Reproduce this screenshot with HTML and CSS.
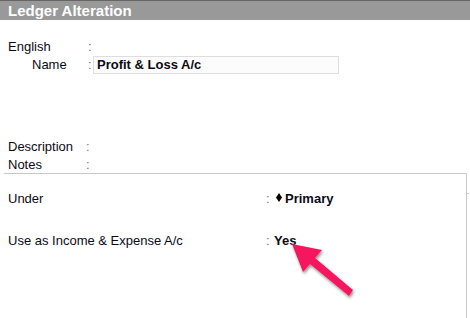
FILE: index.html
```html
<!DOCTYPE html>
<html>
<head>
<meta charset="utf-8">
<link rel="stylesheet" href="styles.css">
</head>
<body>
<div class="page">
  <div class="titlebar">Ledger Alteration</div>
  <div class="top">
    <div class="row">
      <span class="label">English</span><span class="colon">:</span>
    </div>
    <div class="row">
      <span class="label indent">Name</span><span class="colon">:</span>
      <span class="input">Profit &amp; Loss A/c</span>
    </div>
    <div class="spacer"></div>
    <div class="row">
      <span class="label">Description</span><span class="colon c2">:</span>
    </div>
    <div class="row last">
      <span class="label">Notes</span><span class="colon c2">:</span>
    </div>
  </div>
  <div class="bottom">
    <div class="row2">
      <span class="label2">Under</span><span class="colon">:</span>
      <span class="value"><svg class="diamond" width="6" height="9" viewBox="0 0 6 9"><polygon points="3,0 6,4.5 3,9 0,4.5" fill="#000"/></svg>Primary</span>
    </div>
    <div class="row2 gap">
      <span class="label2">Use as Income &amp; Expense A/c</span><span class="colon">:</span>
      <span class="value">Yes</span>
    </div>
    <span class="tick"></span>
  </div>
  <svg class="arrow" width="470" height="318" viewBox="0 0 470 318">
    <defs>
      <filter id="sh" x="-20%" y="-20%" width="140%" height="140%">
        <feDropShadow dx="1" dy="2" stdDeviation="1.6" flood-color="#000" flood-opacity="0.45"/>
      </filter>
    </defs>
    <polygon filter="url(#sh)" fill="#f5175f" points="292,244 322,250 315,258 353,290 349,296 310,264 303,272"/>
  </svg>
</div>
</body>
</html>
```
FILE: styles.css
```css
html, body {
  margin: 0;
  padding: 0;
  background: #fff;
}
.page {
  position: relative;
  width: 470px;
  height: 318px;
  overflow: hidden;
  font-family: "Liberation Sans", Arial, sans-serif;
  font-size: 13px;
  color: #0a0a14;
}
.titlebar {
  height: 19px;
  line-height: 19px;
  background: #999999;
  border-top: 1px solid #666;
  color: #fff;
  font-weight: bold;
  font-size: 15px;
  padding-left: 8px;
}
.top {
  padding-top: 18px;
}
.row {
  display: flex;
  align-items: center;
  height: 18px;
  line-height: 18px;
}
.row.last {
  height: 17px;
  align-items: flex-start;
}
.label {
  width: 80px;
  padding-left: 8px;
  box-sizing: content-box;
}
.label.indent {
  width: 56px;
  padding-left: 32px;
}
.colon {
  color: #7a7466;
  width: 5px;
}
.colon.c2 {
  margin-left: -2px;
  margin-right: 2px;
}
.input {
  margin-left: 0;
  width: 241px;
  height: 16px;
  line-height: 16px;
  border: 1px solid #dedede;
  background: #fcfcfc;
  font-weight: bold;
  padding-left: 3px;
}
.spacer {
  height: 64px;
}
.bottom {
  position: relative;
  margin-left: 4px;
  width: 463px;
  border-top: 1px solid #c8c8c8;
  border-right: 1px solid #c8c8c8;
  height: 200px;
  padding-top: 16px;
  box-sizing: border-box;
}
.row2 {
  display: flex;
  align-items: center;
  height: 18px;
  line-height: 18px;
}
.row2.gap {
  margin-top: 24px;
}
.label2 {
  width: 258px;
  padding-left: 4px;
}
.value {
  display: flex;
  align-items: center;
  font-weight: bold;
  padding-left: 3px;
}
.diamond {
  margin-left: 2px;
  margin-right: 3px;
  margin-top: -4px;
}
.tick {
  position: absolute;
  right: -3px;
  top: 19px;
  width: 2px;
  height: 1px;
  background: #c8c8c8;
}
.arrow {
  position: absolute;
  left: 0;
  top: 0;
  pointer-events: none;
}
```
